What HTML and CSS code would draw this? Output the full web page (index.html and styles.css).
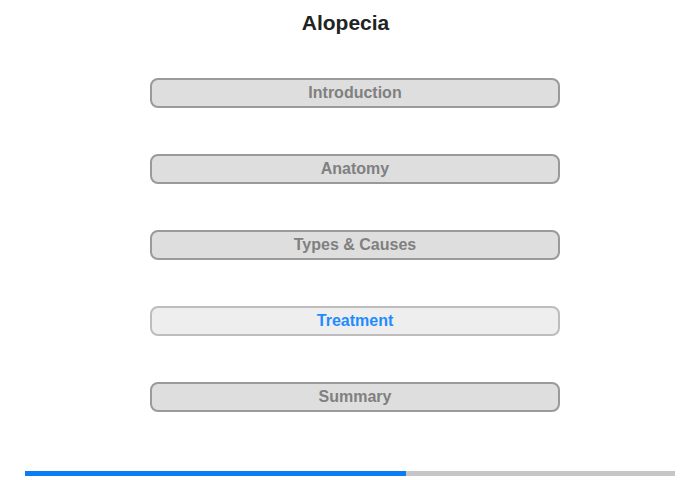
FILE: index.html
```html
<!DOCTYPE html>
<html>
<head>
<meta charset="utf-8">
<link rel="stylesheet" href="styles.css">
</head>
<body>
<div class="page">
  <h1 class="title">Alopecia</h1>
  <nav class="menu">
    <div class="item">Introduction</div>
    <div class="item">Anatomy</div>
    <div class="item">Types &amp; Causes</div>
    <div class="item active">Treatment</div>
    <div class="item">Summary</div>
  </nav>
  <div class="progress"><div class="fill" style="width:58.6%"></div></div>
</div>
</body>
</html>
```
FILE: styles.css
```css
html, body {
  margin: 0;
  padding: 0;
  background: #ffffff;
}
.page {
  width: 700px;
  height: 480px;
  display: flex;
  flex-direction: column;
  font-family: "Liberation Sans", Arial, sans-serif;
}
.title {
  margin: 0;
  padding: 10px 9px 0 0;
  height: 25px;
  line-height: 25px;
  font-size: 21px;
  font-weight: bold;
  color: #222222;
  text-align: center;
}
.menu {
  display: flex;
  flex-direction: column;
  gap: 46px;
  margin: 43px 0 0 150px;
  width: 410px;
}
.item {
  box-sizing: border-box;
  height: 30px;
  border: 2px solid #9a9a9a;
  border-radius: 8px;
  background: #dedede;
  color: #808080;
  font-size: 16px;
  font-weight: bold;
  line-height: 25px;
  text-align: center;
}
.item.active {
  background: #eeeeee;
  border-color: #bdbdbd;
  color: #1e8cff;
}
.progress {
  margin: 59px 0 0 25px;
  width: 650px;
  height: 5px;
  background: #c6c6c6;
}
.fill {
  height: 100%;
  background: #0a7cf5;
}
```
